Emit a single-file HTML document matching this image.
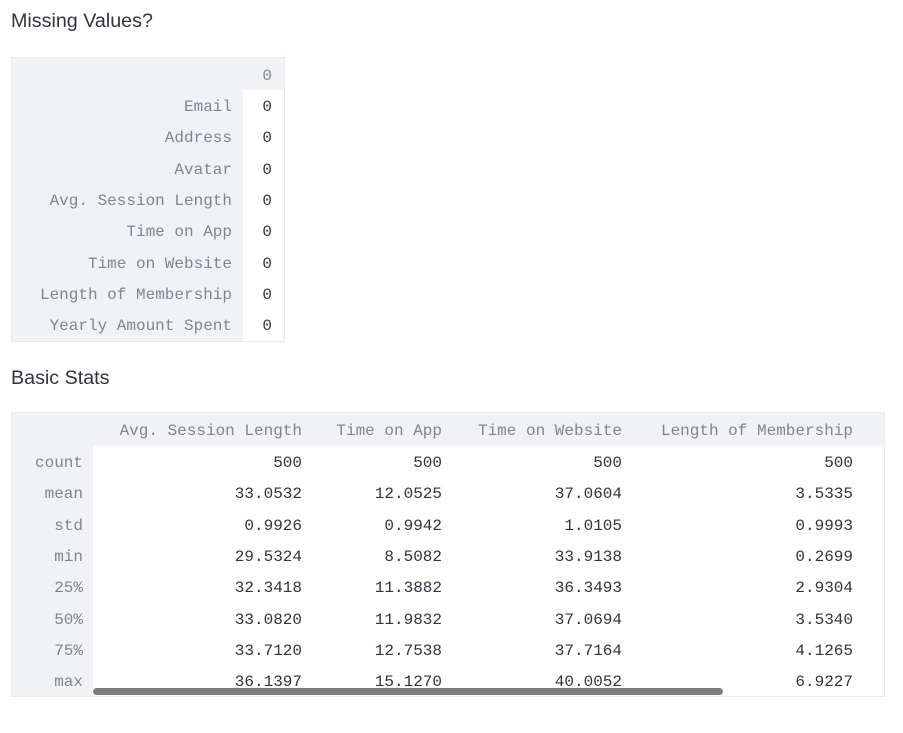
<!DOCTYPE html>
<html><head><style>
body{margin:0;background:#fff;font-family:"Liberation Mono",monospace;font-size:16px;}
.h{position:absolute;font-family:"Liberation Sans",sans-serif;font-size:19.7px;color:#31333f;}
.box{position:absolute;border:1px solid #e8eaef;box-sizing:border-box;}
.bg{position:absolute;background:#f0f2f6;}
.t{position:absolute;white-space:pre;line-height:18px;}
.g{color:#808495}.d{color:#31333f}
</style></head><body>
<div class="h" style="left:11px;top:10px">Missing Values?</div>
<div class="box" style="left:11px;top:57px;width:274px;height:285px"></div>
<div class="bg" style="left:12px;top:58px;width:231px;height:283px"></div>
<div class="bg" style="left:243px;top:58px;width:41px;height:32px"></div>
<div class="h" style="left:11px;top:367px">Basic Stats</div>
<div class="box" style="left:11px;top:412px;width:874px;height:285px"></div>
<div class="bg" style="left:12px;top:413px;width:872px;height:33px"></div>
<div class="bg" style="left:12px;top:446px;width:81px;height:250px"></div>
<div style="position:absolute;left:93px;top:688px;width:630px;height:7px;border-radius:4px;background:#7d7d7d;z-index:2"></div>
<script>
function put(txt,right,y,cls){var e=document.createElement('div');e.className='t '+cls;e.textContent=txt;e.style.right=(903-right)+'px';e.style.top=(y-8)+'px';document.body.appendChild(e);}
var rows1=["Email","Address","Avatar","Avg. Session Length","Time on App","Time on Website","Length of Membership","Yearly Amount Spent"];
put("0",272,75,'g');
rows1.forEach(function(r,i){var y=106+i*31.3;put(r,232,y,'g');put("0",272,y,'d');});
var rights=[302,442,622,853];
["Avg. Session Length","Time on App","Time on Website","Length of Membership"].forEach(function(h,i){put(h,rights[i],430,'g');});
var data=[["count","500","500","500","500"],["mean","33.0532","12.0525","37.0604","3.5335"],["std","0.9926","0.9942","1.0105","0.9993"],["min","29.5324","8.5082","33.9138","0.2699"],["25%","32.3418","11.3882","36.3493","2.9304"],["50%","33.0820","11.9832","37.0694","3.5340"],["75%","33.7120","12.7538","37.7164","4.1265"],["max","36.1397","15.1270","40.0052","6.9227"]];
data.forEach(function(r,i){var y=462+i*31.3;put(r[0],83,y,'g');for(var j=1;j<5;j++)put(r[j],rights[j-1],y,'d');});
</script>
</body></html>
